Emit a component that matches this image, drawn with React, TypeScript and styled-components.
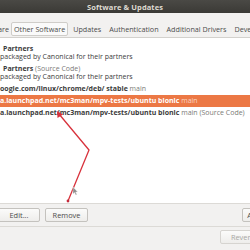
import React from 'react'
import styled, { createGlobalStyle } from 'styled-components'

const GlobalStyle = createGlobalStyle`
    html, body {
        margin: 0;
        padding: 0;
        width: 250px;
        height: 250px;
        overflow: hidden;
        background: #f2f1f0;
    }
    * { box-sizing: border-box; }
`

const Window = styled.div`
    position: relative;
    width: 250px;
    height: 250px;
    overflow: hidden;
    display: flex;
    flex-direction: column;
    background: #f2f1f0;
    font-family: "Open Sans", "DejaVu Sans", sans-serif;
    color: #3c3c3c;
`

const TitleBar = styled.div`
    height: 13px;
    flex: none;
    display: flex;
    align-items: center;
    justify-content: center;
    background: linear-gradient(#4a4945, #3b3a36);
    color: #dfdbd2;
    font-size: 7.5px;
    font-weight: 700;
    letter-spacing: 0.1px;
`

const TabStrip = styled.div`
    height: 25px;
    flex: none;
    display: flex;
    align-items: flex-end;
    gap: 2px;
    padding-bottom: 1px;
    border-bottom: 1px solid #d3d1cd;
    white-space: nowrap;
`

const Tab = styled.div<{ $active?: boolean; $clipped?: boolean }>`
    flex: none;
    height: 14px;
    display: flex;
    align-items: center;
    justify-content: ${p => (p.$clipped ? 'flex-end' : 'center')};
    padding: 0 ${p => (p.$clipped ? '0' : '2px')};
    width: ${p => (p.$clipped ? '9px' : 'auto')};
    overflow: hidden;
    font-size: 7.2px;
    color: #4c4c4c;
    background: ${p => (p.$active ? '#fafafa' : 'transparent')};
    border: ${p => (p.$clipped ? '0' : '1px')} solid ${p => (p.$active ? '#cfcdc9' : 'transparent')};
    border-radius: 2px;
`

const Body = styled.div`
    flex: none;
    display: flex;
    flex-direction: column;
`

const SourceList = styled.div`
    height: 166px;
    background: #fff;
    border-bottom: 1px solid #dcdad6;
    padding-top: 5px;
    display: flex;
    flex-direction: column;
    font-size: 7px;
    white-space: nowrap;
`

const Source = styled.div<{ $selected?: boolean; $tall?: boolean }>`
    height: ${p => (p.$tall ? '20px' : '12px')};
    display: flex;
    flex-direction: column;
    justify-content: center;
    line-height: 8px;
    background: ${p => (p.$selected ? '#ec7845' : 'transparent')};
    color: ${p => (p.$selected ? '#fff' : '#3c3c3c')};
`

const Line = styled.div<{ $indent?: number }>`
    padding-left: ${p => p.$indent ?? 0}px;
`

const Strong = styled.span`
    font-weight: 700;
`

const Muted = styled.span<{ $onSelected?: boolean }>`
    color: ${p => (p.$onSelected ? '#fbd6c4' : '#7b7b78')};
`

const ButtonRow = styled.div`
    height: 23px;
    display: flex;
    align-items: center;
    gap: 5px;
    margin-left: -2px;
    border-bottom: 1px solid #dcdad6;
`

const Spacer = styled.div`
    flex: 1;
`

const Button = styled.div<{ $disabled?: boolean; $width?: number }>`
    flex: none;
    height: 14px;
    width: ${p => (p.$width ? `${p.$width}px` : 'auto')};
    padding: 0 6px;
    display: flex;
    align-items: center;
    justify-content: center;
    font-size: 7.4px;
    color: ${p => (p.$disabled ? '#a8a7a4' : '#4c4c4c')};
    background: linear-gradient(#fbfbfa, #eeedeb);
    border: 1px solid ${p => (p.$disabled ? '#d6d4d0' : '#c4c2be')};
    border-radius: 2px;
    white-space: nowrap;
`

const Footer = styled.div`
    height: 20px;
    display: flex;
    align-items: center;
    justify-content: flex-end;
    margin-right: -14px;
`

const Annotation = styled.svg`
    position: absolute;
    left: 0;
    top: 0;
    pointer-events: none;
`

export default function App() {
    return (
        <>
            <GlobalStyle />
            <Window>
                <TitleBar>Software &amp; Updates</TitleBar>
                <TabStrip>
                    <Tab $clipped>Ubuntu Software</Tab>
                    <Tab $active>Other Software</Tab>
                    <Tab>Updates</Tab>
                    <Tab>Authentication</Tab>
                    <Tab>Additional Drivers</Tab>
                    <Tab>Developer Options</Tab>
                </TabStrip>
                <Body>
                    <SourceList>
                        <Source $tall>
                            <Line $indent={3}><Strong>Partners</Strong></Line>
                            <Line $indent={-1}>packaged by Canonical for their partners</Line>
                        </Source>
                        <Source $tall>
                            <Line $indent={3}><Strong>Partners</Strong> <Muted>(Source Code)</Muted></Line>
                            <Line $indent={-1}>packaged by Canonical for their partners</Line>
                        </Source>
                        <Source>
                            <Line><Strong>oogle.com/linux/chrome/deb/ stable</Strong> <Muted>main</Muted></Line>
                        </Source>
                        <Source $selected>
                            <Line><Strong>a.launchpad.net/mc3man/mpv-tests/ubuntu bionic</Strong> <Muted $onSelected>main</Muted></Line>
                        </Source>
                        <Source>
                            <Line><Strong>a.launchpad.net/mc3man/mpv-tests/ubuntu bionic</Strong> <Muted>main (Source Code)</Muted></Line>
                        </Source>
                    </SourceList>
                    <ButtonRow>
                        <Button $width={42}>Edit...</Button>
                        <Button $width={43}>Remove</Button>
                        <Spacer />
                        <Button $width={30} style={{ marginRight: -22 }}>Add...</Button>
                    </ButtonRow>
                </Body>
                <Footer>
                    <Button $disabled $width={44}>Revert</Button>
                </Footer>
                <Annotation width="250" height="250" viewBox="0 0 250 250">
                    <polyline points="68,201 89,150 59,114" fill="none" stroke="#d8323c" strokeWidth="1.3" strokeLinejoin="round" />
                    <polygon points="57,111 57.5,118 63,114.5" fill="#d8323c" />
                    <circle cx="68" cy="201" r="1.4" fill="#c42a3a" />
                    <path d="M73,187 L73,194 L74.6,192.5 L75.8,195 L76.8,194.5 L75.6,192 L77.6,192 Z" fill="#8a8a8a" stroke="#eee" strokeWidth="0.4" />
                </Annotation>
            </Window>
        </>
    )
}
